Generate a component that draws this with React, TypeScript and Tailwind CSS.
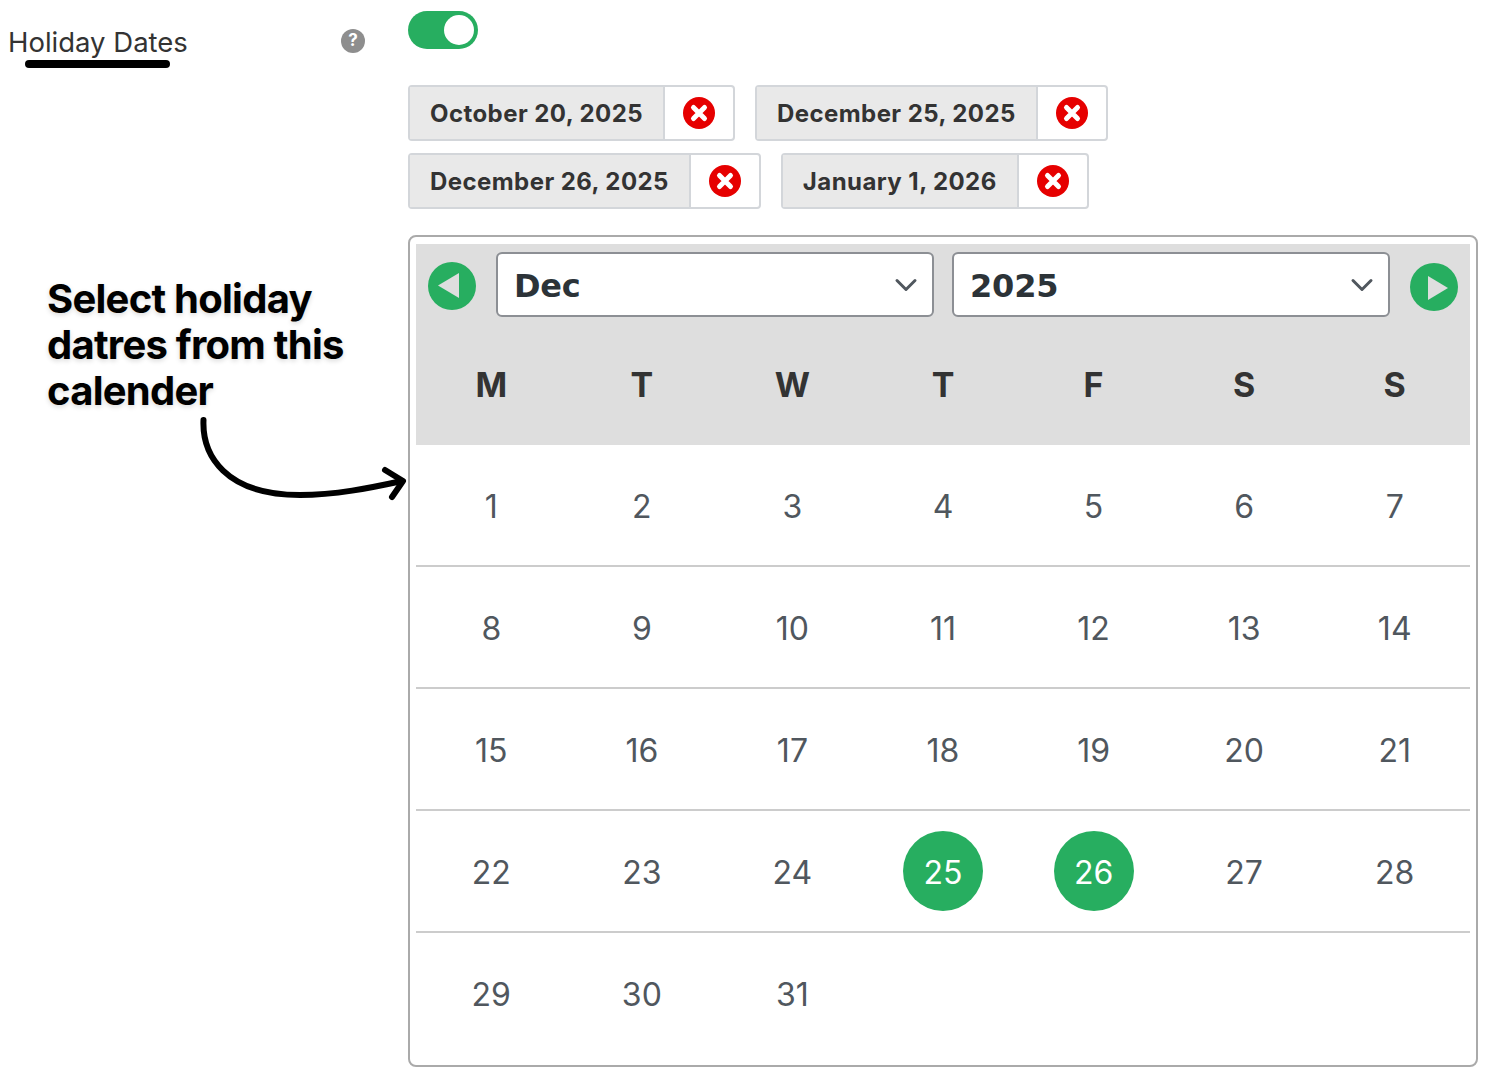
import React from 'react';
import { ChevronDown } from 'lucide-react';

const chips = [
    ['October 20, 2025', 'December 25, 2025'],
    ['December 26, 2025', 'January 1, 2026'],
];

const weekDays = ['M', 'T', 'W', 'T', 'F', 'S', 'S'];

const weeks: (number | null)[][] = [
    [1, 2, 3, 4, 5, 6, 7],
    [8, 9, 10, 11, 12, 13, 14],
    [15, 16, 17, 18, 19, 20, 21],
    [22, 23, 24, 25, 26, 27, 28],
    [29, 30, 31, null, null, null, null],
];

const selected = [25, 26];

const RemoveIcon = () => (
    <svg width="32" height="32" viewBox="0 0 32 32">
        <circle cx="16" cy="16" r="16" fill="#e60000" />
        <path d="M10.5 10.5 L21.5 21.5 M21.5 10.5 L10.5 21.5" stroke="#fff" strokeWidth="5" strokeLinecap="round" />
    </svg>
);

const Chip = ({ label }: { label: string }) => (
    <div className="flex h-14 items-stretch rounded-[4px] border-2 border-[#d3d6da] bg-white">
        <div className="flex items-center bg-[#e9e9e9] pl-[20px] pr-[20px] pt-[2px] text-[24px] font-bold tracking-[0.43px] text-[#333333]">
            {label}
        </div>
        <div className="flex w-[70px] items-center justify-center border-l-2 border-[#d3d6da]">
            <RemoveIcon />
        </div>
    </div>
);

const Select = ({ value }: { value: string }) => (
    <div className="flex h-[65px] w-[438px] items-center justify-between rounded-[6px] border-2 border-[#8c8f94] bg-white pl-4 pr-2">
        <span className="pt-[2px] text-[32px] font-bold text-[#2c3338] font-['DejaVu_Sans',sans-serif] tracking-[-0.2px]">{value}</span>
        <ChevronDown size={36} strokeWidth={2} className="text-[#50575e]" />
    </div>
);

const App = () => {
    return (
        <div className="relative flex h-[1076px] w-[1486px] bg-white font-['Inter',sans-serif]">
            {/* Label column */}
            <div className="w-[408px] shrink-0">
                <div className="mt-[22px] flex w-[365px] items-center justify-between pl-2">
                    <span className="pt-[1px] text-[27.5px] leading-[38px] text-[#333333]">Holiday Dates</span>
                    <span className="mb-[1px] flex h-6 w-6 items-center justify-center rounded-full bg-[#8e8e8e] text-[17px] font-bold text-white">?</span>
                </div>
            </div>

            {/* Field column */}
            <div className="w-[1070px] pt-[11px]">
                <div className="flex h-[38px] w-[70px] items-center justify-end rounded-full bg-[#27ae60] pr-1">
                    <div className="h-[30px] w-[30px] rounded-full bg-white" />
                </div>

                <div className="mt-9 flex flex-col gap-3">
                    {chips.map((row, i) => (
                        <div key={i} className="flex gap-5">
                            {row.map((label) => (
                                <Chip key={label} label={label} />
                            ))}
                        </div>
                    ))}
                </div>

                <div className="mt-[26px] h-[832px] rounded-[8px] border-2 border-[#aaaaaa] px-[6px] pt-[7px]">
                    <div className="h-[201px] bg-[#dedede]">
                        <div className="flex h-[81px] items-center px-3">
                            <svg width="48" height="48" viewBox="0 0 48 48" className="mt-[2px] shrink-0">
                                <circle cx="24" cy="24" r="24" fill="#27ae60" />
                                <path d="M10 23.5 L31 11 L31 36 Z" fill="#dedede" />
                            </svg>
                            <div className="ml-5 flex gap-[18px]">
                                <Select value="Dec" />
                                <Select value="2025" />
                            </div>
                            <svg width="48" height="48" viewBox="0 0 48 48" className="ml-5 mt-[4px] shrink-0">
                                <circle cx="24" cy="24" r="24" fill="#27ae60" />
                                <path d="M38 25 L18 13 L18 37 Z" fill="#dedede" />
                            </svg>
                        </div>
                        <div className="grid h-[120px] grid-cols-7 items-center pb-[1px]">
                            {weekDays.map((d, i) => (
                                <div key={i} className="text-center text-[34px] font-bold text-[#333333]">{d}</div>
                            ))}
                        </div>
                    </div>

                    {weeks.map((week, i) => (
                        <div key={i} className={`grid h-[122px] grid-cols-7 items-center ${i < 4 ? 'border-b-2 border-[#cccccc]' : 'pb-[2px]'}`}>
                            {week.map((day, j) => (
                                <div key={j} className="flex justify-center">
                                    {day !== null && (
                                        <span className={`flex h-20 w-20 items-center justify-center rounded-full pt-[3px] text-[32px] ${selected.includes(day) ? 'bg-[#27ae60] text-white' : 'text-[#50575e]'}`}>
                                            {day}
                                        </span>
                                    )}
                                </div>
                            ))}
                        </div>
                    ))}
                </div>
            </div>

            {/* Annotations drawn over the form */}
            <div className="absolute left-[25px] top-[60px] h-2 w-[145px] rounded-full bg-black" />
            <div className="absolute left-[47px] top-[276px] text-[40px] font-bold leading-[46px] tracking-[-0.75px] text-black [text-shadow:0_2px_5px_rgba(0,0,0,0.15)]">
                Select holiday<br />datres from this<br />calender
            </div>
            <svg className="absolute left-[195px] top-[410px]" width="220" height="95" viewBox="0 0 220 95" fill="none">
                <path d="M8.5 10 C7 45 30 85 105 85 C140 85 175 78 207 71" stroke="#000" strokeWidth="6" strokeLinecap="round" />
                <path d="M190 60 L208 71 L197 87" stroke="#000" strokeWidth="6" strokeLinecap="round" strokeLinejoin="round" />
            </svg>
        </div>
    );
};

export default App;
